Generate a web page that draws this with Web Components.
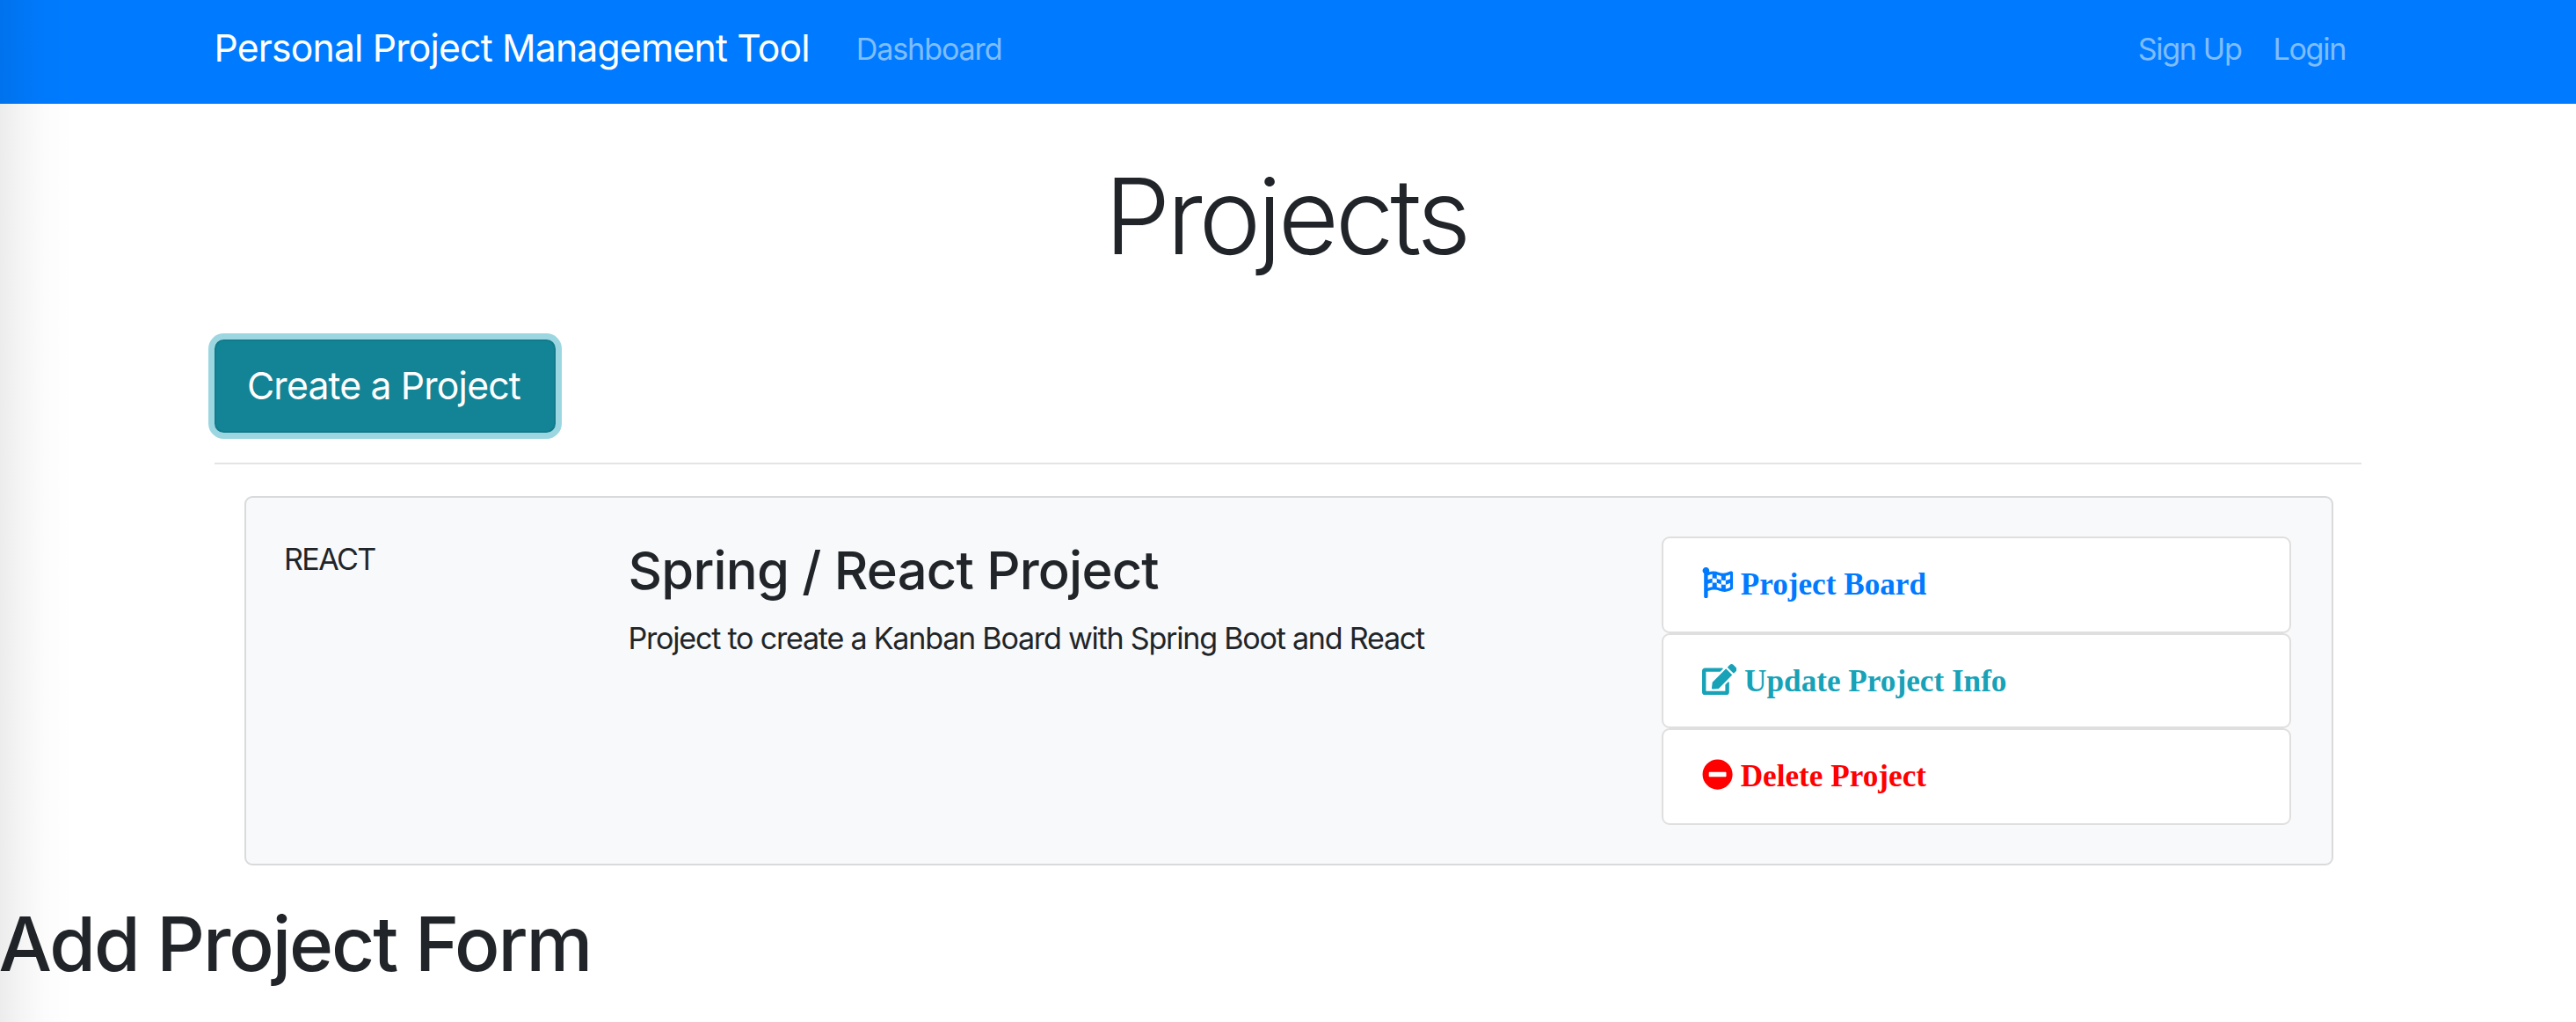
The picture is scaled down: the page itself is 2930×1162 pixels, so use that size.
<!DOCTYPE html>
<html lang="en">
<head>
<meta charset="utf-8">
<title>Personal Project Management Tool</title>
<style>
html, body { margin: 0; height: 100%; overflow: hidden; background: #fff; }
body { font: 400 34.1px/53px Inter, "Liberation Sans", sans-serif; color: #212529; white-space: nowrap; }
</style>
</head>
<body>
<app-page>
  <app-navbar></app-navbar>
  <project-dashboard>
    <project-item code="REACT" name="Spring / React Project" description="Project to create a Kanban Board with Spring Boot and React"></project-item>
  </project-dashboard>
  <form-heading>Add Project Form</form-heading>
</app-page>
<script>
class Base extends HTMLElement {
  connectedCallback() {
    if (!this.shadowRoot) this.attachShadow({ mode: 'open' }).innerHTML = this.view();
  }
}

customElements.define('app-page', class extends Base {
  view() { return `
    <style>
      :host { display: flex; flex-direction: column; position: relative; height: 1162px; overflow: hidden; }
      .edge { position: absolute; top: 0; bottom: 0; left: 0; width: 84px; pointer-events: none;
        background: linear-gradient(90deg, rgba(0,0,0,.075), rgba(0,0,0,.038) 30%, rgba(0,0,0,.01) 62%, rgba(0,0,0,0)); }
    </style>
    <slot></slot><div class="edge"></div>`; }
});

customElements.define('app-navbar', class extends Base {
  view() { return `
    <style>
      :host { display: flex; align-items: flex-start; box-sizing: border-box; height: 118px; padding: 0 262px 0 243.5px; background: #007bff; }
      a { color: rgba(255,255,255,.5); text-decoration: none; }
      .brand { margin: 21.5px 53px 0 0; font-size: 42.7px; line-height: 66px; letter-spacing: -.82px; color: #fff; }
      nav { display: flex; gap: 36px; padding-top: 29px; letter-spacing: -1.112px; }
      .account { margin-left: auto; letter-spacing: -1.3px; }
    </style>
    <a class="brand">Personal Project Management Tool</a>
    <nav><a>Dashboard</a></nav>
    <nav class="account"><a>Sign Up</a><a>Login</a></nav>`; }
});

customElements.define('project-dashboard', class extends Base {
  view() { return `
    <style>
      :host { display: flex; flex-direction: column; padding: 54px 244px 0; }
      h1 { margin: 0 0 66px; padding-right: 5px; text-align: center; font-size: 119.5px; font-weight: 300; line-height: 148px; letter-spacing: -4.3px; }
      hr { width: 100%; height: 2px; margin: 34px 0 36px; border: 0; background: #e4e4e4; }
      .list { padding: 0 32px 0 34px; }
    </style>
    <h1>Projects</h1>
    <create-button>Create a Project</create-button>
    <hr>
    <div class="list"><slot></slot></div>`; }
});

customElements.define('create-button', class extends Base {
  view() { return `
    <style>
      :host { display: flex; align-self: flex-start; }
      button { box-sizing: border-box; width: 388px; height: 106px; padding: 0 0 0 35px; text-align: left;
        font: 400 42.7px/66px Inter, "Liberation Sans", sans-serif; letter-spacing: -.82px; color: #fff;
        background: #138496; border: 2px solid #117a8b; border-radius: 10.5px; box-shadow: 0 0 0 7px rgba(58,176,195,.5); }
    </style>
    <button><slot></slot></button>`; }
});

customElements.define('project-item', class extends Base {
  view() {
    const a = n => this.getAttribute(n);
    return `
    <style>
      :host { display: flex; box-sizing: border-box; height: 420px; padding: 44px 46px 44px 43px; background: #f8f9fa;
        border: 2px solid #d9dadb; border-radius: 9px; }
      .code { width: 391.5px; margin-top: -1px; letter-spacing: -1.6px; }
      .info { flex: 1; }
      h3 { margin: 1px 0 14px; font-size: 59.7px; font-weight: 500; line-height: 74px; letter-spacing: -.77px; }
      .text { letter-spacing: -1.225px; }
      .actions { display: flex; flex-direction: column; width: 716px; }
    </style>
    <div class="code">${a('code')}</div>
    <div class="info"><h3>${a('name')}</h3><div class="text">${a('description')}</div></div>
    <div class="actions">
      <project-action icon="flag" style="--tone:#007bff;--height:110px">Project Board</project-action>
      <project-action icon="edit" style="--tone:#17a2b8;--height:108px">Update Project Info</project-action>
      <project-action icon="minus" style="--tone:#f00;--height:110px">Delete Project</project-action>
    </div>`; }
});

const ICONS = {
  flag: [512, 'M243.2 189.9V258c26.1 5.9 49.3 15.6 73.6 22.3v-68.2c-26-5.8-49.4-15.5-73.6-22.2zm223.3-123c-34.3 15.9-76.5 31.9-117 31.9C296 98.8 251.7 64 184.3 64c-25 0-47.3 4.4-68 12 2.8-7.3 4.1-15.2 3.6-23.6C118.1 24 94.8 1.2 66.3 0 34.3-1.3 8 24.3 8 56c0 19 9.5 35.8 24 45.9V488c0 13.3 10.7 24 24 24h16c13.3 0 24-10.7 24-24v-94.4c28.3-12.1 63.6-22.1 114.4-22.1 53.6 0 97.8 34.8 165.2 34.8 48.2 0 86.7-16.3 122.5-40.9 8.7-6 13.8-15.8 13.8-26.4V95.9c.1-23.3-24.2-38.8-45.4-29zM169.6 325.5c-25.8 2.7-50 8.2-73.6 16.6v-70.5c26.2-9.3 47.5-15 73.6-17.4v71.3zM464 191c-23.6 9.8-46.3 19.5-73.6 23.9V286c24.8-3.4 51.4-11.8 73.6-26v70.5c-25.1 16.1-48.5 24.7-73.6 27.1V286c-27 3.7-47.9 1.5-73.6-5.6v67.4c-23.9-7.4-47.3-16.7-73.6-21.3V258c-19.7-4.4-40.8-6.8-73.6-3.8v-70c-22.4 3.1-44.6 10.2-73.6 20.9v-70.5c33.2-12.2 50.1-19.8 73.6-22v71.6c27-3.7 48.4-1.3 73.6 5.7v-67.4c23.7 7.4 47.2 16.7 73.6 21.3v68.4c23.7 5.3 47.6 7.1 73.6 2.7V143c27.1-4.8 52.3-13.6 73.6-22.5z'],
  edit: [576, 'M402.6 83.2l90.2 90.2c3.8 3.8 3.8 10 0 13.8L274.4 405.6l-92.8 10.3c-12.4 1.4-22.9-9.1-21.5-21.5l10.3-92.8L388.8 83.2c3.8-3.8 10-3.8 13.8 0zm162-22.9l-48.8-48.8c-15.2-15.2-39.9-15.2-55.2 0l-35.4 35.4c-3.8 3.8-3.8 10 0 13.8l90.2 90.2c3.8 3.8 10 3.8 13.8 0l35.4-35.4c15.2-15.3 15.2-40 0-55.2zM384 346.2V448H64V128h229.8c3.2 0 6.2-1.3 8.5-3.5l40-40c7.6-7.6 2.2-20.5-8.5-20.5H48C21.5 64 0 85.5 0 112v352c0 26.5 21.5 48 48 48h352c26.5 0 48-21.5 48-48V306.2c0-10.7-12.9-16-20.5-8.5l-40 40c-2.2 2.3-3.5 5.3-3.5 8.5z'],
  minus: [512, 'M256 8C119 8 8 119 8 256s111 248 248 248 248-111 248-248S393 8 256 8zM124 296c-6.6 0-12-5.4-12-12v-56c0-6.6 5.4-12 12-12h264c6.6 0 12 5.4 12 12v56c0 6.6-5.4 12-12 12H124z']
};

customElements.define('project-action', class extends Base {
  view() {
    const [w, d] = ICONS[this.getAttribute('icon')];
    return `
    <style>
      :host { display: flex; align-items: flex-start; gap: 8.8px; box-sizing: border-box; height: var(--height); padding-left: 43.7px;
        color: var(--tone); background: #fff; border: 2px solid #dfdfdf; border-radius: 9px;
        font: 700 35.2px/106px "Liberation Serif", serif; }
      svg { display: block; height: 35.2px; width: ${w / 512 * 35.2}px; margin-top: 33px; fill: currentColor; }
    </style>
    <svg viewBox="0 0 ${w} 512"><path d="${d}"/></svg><span><slot></slot></span>`; }
});

customElements.define('form-heading', class extends Base {
  view() { return `
    <style>
      :host { display: block; padding: 36px 0 0; }
      h1 { margin: 0 0 0 -1.5px; font-size: 85.3px; font-weight: 500; line-height: 106px; letter-spacing: -2.065px; }
    </style>
    <h1><slot></slot></h1>`; }
});
</script>
</body>
</html>
